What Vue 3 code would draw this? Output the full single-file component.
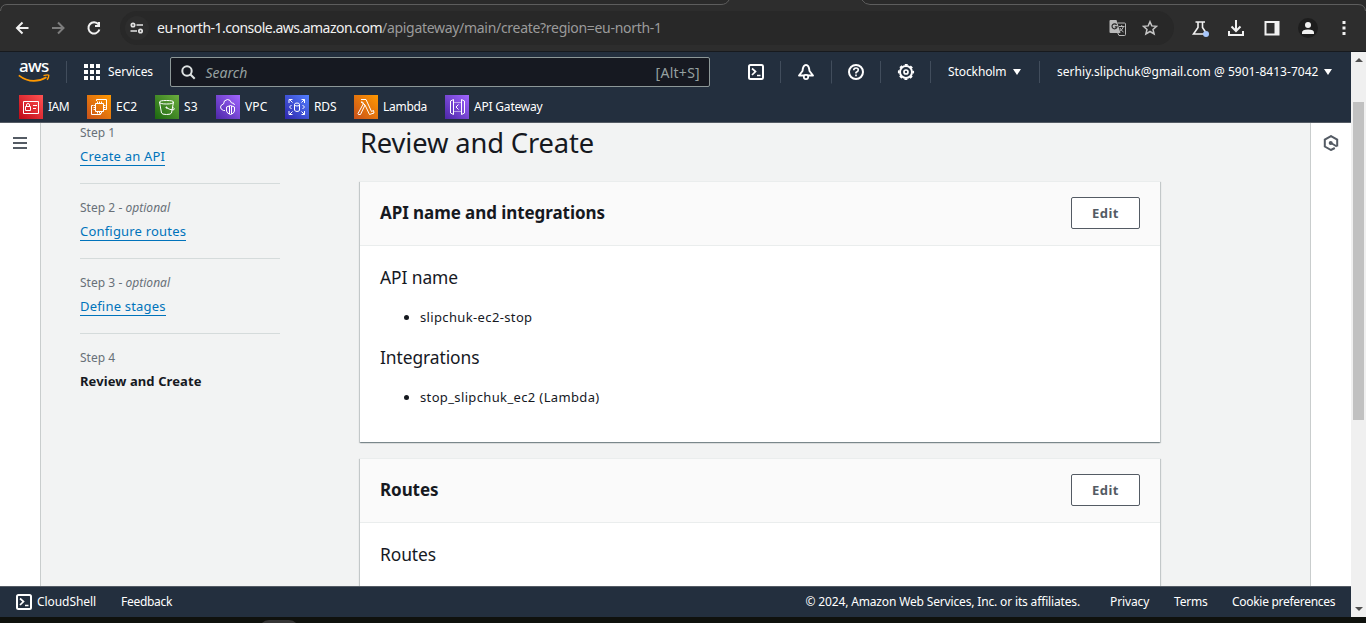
<script setup>
const steps = [
  { label: 'Step 1', title: 'Create an API', cls: 'loose' },
  { label: 'Step 2', optional: true, title: 'Configure routes', cls: 'loose' },
  { label: 'Step 3', optional: true, title: 'Define stages', cls: 'loose' },
  { label: 'Step 4', title: 'Review and Create', cls: 'current' },
]
</script>

<template>
  <div class="page">
    <header class="chrome">
      <svg class="tabline" width="1366" height="14" viewBox="0 0 1366 14" fill="none">
        <path d="M0 0H1366V14H0Z" fill="#2a2a2a" />
        <path d="M0 14V12Q0 4.500 7 4.500H722Q727 4.500 729 0H862Q865 4.500 870 4.500H1359Q1366 4.500 1366 12V14Z" fill="#2d2d2d" />
        <path d="M.5 11Q1 4.500 7 4.500H721Q726.500 4.500 729 0M862 0Q865 4.500 870 4.500H1358Q1365 4.500 1365.500 11" stroke="#5d5d5d" />
      </svg>
      <div class="toolbar">
        <svg class="nav-icons" width="100" height="20" viewBox="10 18 100 20" fill="none" stroke-width="2">
          <path d="M28.500 28H17.500M22.500 22.500L17 28L22.500 33.500" stroke="#f1f1f1" />
          <path d="M52 28H63M58 22.500L63.500 28L58 33.500" stroke="#7d7d7d" />
          <path d="M98.500 24.500A5.600 5.600 0 1 0 99.400 29.500" stroke="#f1f1f1" />
          <path d="M100 22V27H95V25H98V22Z" fill="#f1f1f1" />
        </svg>
        <div class="address">
          <span class="site-info">
            <svg width="14" height="12" viewBox="0 0 14 12" fill="none" stroke="#e3e3e3" stroke-width="1.700">
              <circle cx="3" cy="3" r="1.700" /><path d="M6.500 3H13M.5 9H7" /><circle cx="10.500" cy="9" r="1.700" />
            </svg>
          </span>
          <span class="host">eu-north-1.console.aws.amazon.com</span><span class="path">/apigateway/main/create?region=eu-north-1</span>
          <svg class="translate" width="18" height="18" viewBox="0 0 18 18" fill="none">
            <path d="M1.500 1H7.500L11.500 14H1.500Q.5 14 .5 13V2Q.5 1 1.500 1Z" fill="#b9b9b9" />
            <path d="M8.500 4H15.500Q16.500 4 16.500 5V15.500Q16.500 16.500 15.500 16.500H10L8.500 13.500" stroke="#b9b9b9" />
            <path d="M10 7.500H15.500M12.700 6V7.500M14.500 7.500Q13.500 11 10.500 12.500M11 9Q12 11.500 14.500 13" stroke="#b9b9b9" />
            <path d="M7.600 5.900A2.500 2.500 0 1 0 8 7.800H5.800" stroke="#292929" stroke-width="1.200" />
          </svg>
          <svg class="star" width="16" height="16" viewBox="0 0 16 16" fill="none" stroke="#c5c5c5" stroke-width="1.500">
            <path d="M8 1.700L9.800 5.900L14.500 6.300L11 9.400L12.100 14L8 11.500L3.900 14L5 9.400L1.500 6.300L6.200 5.900Z" />
          </svg>
        </div>
        <svg class="ext-icons" width="170" height="24" viewBox="1186 16 170 24" fill="none" stroke="#f1f1f1" stroke-width="2">
          <path d="M1195.500 22H1205M1198 22V27.500L1193.500 34H1204M1202.500 22V27.500L1205.500 32" stroke-width="1.600" />
          <circle cx="1206" cy="34" r="3" fill="#a8c7fa" stroke="none" />
          <path d="M1236 20V30M1231.500 26.500L1236 31L1240.500 26.500M1229 31V35H1243V31" />
          <rect x="1265.500" y="22" width="13" height="12.500" /><path d="M1276.500 22V34" stroke-width="4" />
          <circle cx="1308" cy="28" r="10" fill="#1d1d1d" stroke="none" />
          <circle cx="1308" cy="25" r="3" fill="#f1f1f1" stroke="none" />
          <path d="M1302 34V32.500Q1302 29.500 1308 29.500Q1314 29.500 1314 32.500V34Z" fill="#f1f1f1" stroke="none" />
          <path d="M1344 21V24M1344 26.500V29.500M1344 32V35" stroke-width="3" />
        </svg>
      </div>
    </header>

    <div class="viewport">
      <div class="site">
        <nav class="topnav">
          <div class="row1">
            <div class="logo">
              <span>aws</span>
              <svg width="33" height="9" viewBox="0 0 33 9" fill="none" stroke="#ff9900" stroke-width="1.700">
                <path d="M.8 1.300Q14 11.500 28.500 3.200" /><path d="M25.500 1.600Q30 .3 30.800 1.200Q30.800 3.500 29.200 5.800" stroke-width="1.400" />
              </svg>
            </div>
            <i class="sep s1"></i>
            <svg class="grid-icon" width="16" height="16" viewBox="0 0 16 16" fill="#fff">
              <path d="M0 0h4v4H0zM6 0h4v4H6zM12 0h4v4h-4zM0 6h4v4H0zM6 6h4v4H6zM12 6h4v4h-4zM0 12h4v4H0zM6 12h4v4H6zM12 12h4v4h-4z" />
            </svg>
            <span class="services">Services</span>
            <div class="search">
              <svg width="15" height="15" viewBox="0 0 15 15" fill="none" stroke="#dfe3e3" stroke-width="2">
                <circle cx="6" cy="6" r="4.700" /><path d="M9.500 9.500L13.700 13.700" />
              </svg>
              <span class="ph">Search</span><span class="kbd">[Alt+S]</span>
            </div>
            <svg class="tools" width="184" height="24" viewBox="740 60 184 24" fill="none" stroke="#fff" stroke-width="2">
              <rect x="749" y="65" width="14" height="14" rx="1.500" />
              <path d="M752 68.500L755.500 71.500L752 75M757 75.500H760.500" stroke-width="1.700" />
              <path d="M780.500 61V83M831.500 60.500V83.500M880.500 61V83" stroke="#414d5c" stroke-width="1" />
              <path d="M799 75.500L802.500 71Q803 65 806 65Q809 65 809.500 71L813 75.500Z" stroke-width="1.900" stroke-linejoin="round" />
              <circle cx="806" cy="77" r="2.200" fill="#232f3e" stroke-width="1.700" />
              <circle cx="856" cy="72" r="7" />
              <path d="M853.700 70.300Q853.800 68 856 68Q858.300 68 858.300 70Q858.300 71.300 856 72.500V73.500M856 74.500V76.300" stroke-width="1.600" />
              <circle cx="906" cy="72" r="6" />
              <circle cx="906" cy="72" r="7.300" stroke-width="1.600" stroke-dasharray="2.870 2.864" stroke-dashoffset="1.430" />
              <circle cx="906" cy="72" r="2" stroke-width="1.700" />
            </svg>
            <i class="sep s2"></i>
            <span class="region">Stockholm</span><b class="caret"></b>
            <i class="sep s3"></i>
            <span class="account">serhiy.slipchuk@gmail.com @ 5901-8413-7042</span><b class="caret"></b>
          </div>
          <div class="row2">
            <svg width="0" height="0" class="defs">
              <defs>
                <linearGradient id="gr" x1="0" y1="1" x2="1" y2="0"><stop stop-color="#bd0816" /><stop offset="1" stop-color="#ff5252" /></linearGradient>
                <linearGradient id="go" x1="0" y1="1" x2="1" y2="0"><stop stop-color="#c8511b" /><stop offset="1" stop-color="#ff9900" /></linearGradient>
                <linearGradient id="gg" x1="0" y1="1" x2="1" y2="0"><stop stop-color="#1b660f" /><stop offset="1" stop-color="#6cae3e" /></linearGradient>
                <linearGradient id="gp" x1="0" y1="1" x2="1" y2="0"><stop stop-color="#4d27a8" /><stop offset="1" stop-color="#a166ff" /></linearGradient>
                <linearGradient id="gb" x1="0" y1="1" x2="1" y2="0"><stop stop-color="#2e27ad" /><stop offset="1" stop-color="#527fff" /></linearGradient>
              </defs>
            </svg>
            <div class="fav iam">
              <svg width="24" height="24" viewBox="0 0 24 24"><path d="M0 0H24V24H0Z" fill="url(#gr)" /><path d="M4.500 6.500H19.500V18.500H4.500ZM6.500 11.500H11.500V15.500H6.500ZM7.500 11.500V10Q7.500 8.500 9 8.500Q10.500 8.500 10.500 10V11.500M14 10.500H18M14 13.500H17" /></svg>
              <span>IAM</span>
            </div>
            <div class="fav">
              <svg width="24" height="24" viewBox="0 0 24 24"><path d="M0 0H24V24H0Z" fill="url(#go)" /><path d="M8.500 8.500H16.500V16.500H8.500ZM10.500 8.500V6.500M12.500 8.500V6.500M14.500 8.500V6.500M10.500 16.500V18.500M12.500 16.500V18.500M14.500 16.500V18.500M6.500 10.500H8.500M6.500 12.500H8.500M6.500 14.500H8.500M16.500 10.500H18.500M16.500 12.500H18.500M16.500 14.500H18.500M9.500 6V4.500H19.500V14.500H18M6 10.500H4.500V19.500H13.500V18" /></svg>
              <span>EC2</span>
            </div>
            <div class="fav s3b">
              <svg width="24" height="24" viewBox="0 0 24 24"><path d="M0 0H24V24H0Z" fill="url(#gg)" /><path d="M4.500 7L6.500 18Q7 19.500 11.500 19.500Q16 19.500 16.500 18L18.500 7M4.500 7Q4.500 5.500 11.500 5.500Q18.500 5.500 18.500 7Q18.500 9 11.500 9Q4.500 9 4.500 7M11 12.500Q15 15 18.500 15Q20.500 14 17.500 12" /><circle cx="11.500" cy="12.500" r=".6" /></svg>
              <span>S3</span>
            </div>
            <div class="fav vpc">
              <svg width="24" height="24" viewBox="0 0 24 24"><path d="M0 0H24V24H0Z" fill="url(#gp)" /><path d="M9 15.500H7.500Q4.500 14.500 4.500 12Q5 9.500 7.500 9Q7.500 5 11.500 4.500Q14.500 4.500 15.500 8Q18 7.500 18.500 10M10.500 12L14.500 10.500L18.500 12V16Q18 18.500 14.500 19.500Q11 18.500 10.500 16ZM13.500 11V19M15.500 11V19" /></svg>
              <span>VPC</span>
            </div>
            <div class="fav rds">
              <svg width="24" height="24" viewBox="0 0 24 24"><path d="M0 0H24V24H0Z" fill="url(#gb)" /><path d="M9.500 9.500V15Q10 16.500 12 16.500Q14.500 16.500 14.500 15V9.500Q14.500 8 12 8Q9.500 8 9.500 9.500Q9.500 11 12 11Q14.500 11 14.500 9.500M4 8V4.500H7.500M4.500 4.500L7.500 7.500M16.500 4.500H19.500V8M19.500 4.500L16.500 7.500M4 16V19.500H7.500M4.500 19.500L7.500 16.500M16.500 19.500H19.500V16M19.500 19.500L16.500 16.500M6.500 10L4.500 12L6.500 14M17.500 10L19.500 12L17.500 14" /></svg>
              <span>RDS</span>
            </div>
            <div class="fav lambda">
              <svg width="24" height="24" viewBox="0 0 24 24"><path d="M0 0H24V24H0Z" fill="url(#go)" /><path d="M7 4.500H12L17.500 16.500L19.500 15.500L20 18L15.500 19.500L11 10M11 10L6.500 19.500H4.500L4 18.500L9.500 8.500L8.500 7H7ZM11 10L9.500 8.500" /></svg>
              <span>Lambda</span>
            </div>
            <div class="fav gateway">
              <svg width="24" height="24" viewBox="0 0 24 24"><path d="M0 0H24V24H0Z" fill="url(#gp)" /><path d="M8.500 4.500V19.500L5.500 18V6ZM16.500 4.500V19.500L19.500 18V6ZM13.500 9.500L11 12L13.500 14.500" /><path d="M9.500 7.500H16M9.500 16.500H16" stroke-dasharray="1 1" /></svg>
              <span>API Gateway</span>
            </div>
          </div>
        </nav>

        <div class="body">
          <aside class="rail left">
            <svg width="14" height="12" viewBox="0 0 14 12" fill="#545b64"><path d="M0 0H14V2H0ZM0 5H14V7H0ZM0 10H14V12H0Z" /></svg>
          </aside>
          <div class="content">
            <ol class="steps">
              <li v-for="s in steps" :key="s.label">
                <div class="label">{{ s.label }}<template v-if="s.optional"> - <i>optional</i></template></div>
                <span :class="['title', s.cls]">{{ s.title }}</span>
              </li>
            </ol>
            <main class="main">
              <h1>Review and Create</h1>
              <section class="card">
                <div class="card-head"><h2>API name and integrations</h2><button><span>Edit</span></button></div>
                <div class="card-body">
                  <h3>API name</h3>
                  <ul><li>slipchuk-ec2-stop</li></ul>
                  <h3>Integrations</h3>
                  <ul><li>stop_slipchuk_ec2 (Lambda)</li></ul>
                </div>
              </section>
              <section class="card">
                <div class="card-head"><h2>Routes</h2><button><span>Edit</span></button></div>
                <div class="card-body"><h3>Routes</h3></div>
              </section>
            </main>
          </div>
          <aside class="rail right">
            <svg width="16" height="16" viewBox="0 0 16 16" fill="none" stroke="#545b64" stroke-width="2">
              <path d="M11.800 13L8 15L1.800 11.500V4.500L8 1.100L14.200 4.500V11.500" /><circle cx="7.700" cy="7.900" r="2" fill="#545b64" stroke="none" /><path d="M8 8L13.800 11.500" />
            </svg>
          </aside>
        </div>

        <footer class="footer">
          <svg width="16" height="16" viewBox="0 0 16 16" fill="none" stroke="#fff" stroke-width="2">
            <rect x="1" y="1" width="14" height="14" rx="1.500" /><path d="M4 4.500L7.500 7.500L4 11M9 11.500H12.500" stroke-width="1.700" />
          </svg>
          <span class="f-shell">CloudShell</span>
          <span class="f-feed">Feedback</span>
          <span class="f-copy">© 2024, Amazon Web Services, Inc. or its affiliates.</span>
          <span class="f-priv">Privacy</span>
          <span class="f-terms">Terms</span>
          <span class="f-cook">Cookie preferences</span>
        </footer>
      </div>
      <div class="scrollbar">
        <b class="up"></b><div class="thumb"></div><b class="down"></b>
      </div>
    </div>
    <div class="desk"><i></i></div>
  </div>
</template>

<style>
body { background: #0f110d; overflow: hidden; }
</style>

<style scoped>
* { box-sizing: border-box; }
svg { flex: none; display: block; }
.page { width: 1366px; height: 623px; overflow: hidden; display: flex; flex-direction: column; font-family: "Noto Sans", "Open Sans", sans-serif; white-space: nowrap; }
.chrome { height: 52px; flex: none; background: #2d2d2d; border-bottom: 1px solid #171a1e; position: relative; }
.tabline { position: absolute; left: 0; top: 0; }
.toolbar { position: relative; display: flex; align-items: center; height: 34px; margin-top: 11px; padding-left: 10px; }
.address { display: flex; align-items: center; width: 1054px; height: 34px; margin-left: 10px; border-radius: 17px; background: #282828; padding-left: 5px; font-size: 14px; line-height: 20px; }
.site-info { width: 24px; height: 24px; border-radius: 12px; background: #2d2d2d; display: flex; align-items: center; justify-content: center; margin-right: 8px; }
.host { color: #f1f1f1; width: 225px; letter-spacing: -.517px; }
.path { color: #9b9b9b; letter-spacing: -.3px; }
.translate { margin-left: auto; }
.star { margin: 0 16px 0 15px; }
.ext-icons { margin-left: 12px; }

.viewport { display: flex; height: 565px; flex: none; }
.site { width: 1351px; display: flex; flex-direction: column; background: #fff; }
.topnav { height: 71px; flex: none; background: #232f3e; border-bottom: 1px solid #545b64; color: #fff; font-size: 12px; line-height: 17px; }
.row1 { display: flex; height: 40px; align-items: center; padding-left: 18px; }
.logo { width: 33px; height: 24px; }
.logo span { display: block; font-size: 17px; line-height: 14px; height: 14px; font-weight: 500; letter-spacing: -.7px; margin-top: -1px; padding-left: 1px; }
.logo svg { margin-top: 1px; }
.sep { width: 1px; height: 22px; background: #414d5c; flex: none; }
.s1 { margin-left: 15px; margin-right: 17px; }
.services, .region, .account, .fav span, .footer span { padding-bottom: 1px; }
.services { margin-left: 8px; width: 62px; letter-spacing: -.098px; }
.search { width: 540px; height: 30px; border: 1px solid #8d9898; border-radius: 2px; background: #161921; display: flex; align-items: center; padding: 0 9px 0 10px; color: #95a0a0; font-size: 14px; line-height: 20px; }
.ph { font-style: italic; margin-left: 9.500px; padding-top: 1px; }
.kbd { margin-left: auto; letter-spacing: .28px; padding-top: 1px; }
.tools { margin-left: 30px; }
.s2 { margin-left: 6px; margin-right: 17px; }
.region { letter-spacing: -.094px; width: 65px; }
.caret { width: 0; height: 0; border: 4px solid transparent; border-top: 6px solid #fff; border-bottom: 0; }
.s3 { margin-left: 18px; margin-right: 17px; }
.account { width: 267px; letter-spacing: .034px; }
.row2 { display: grid; grid-template-columns: 68px 68px 61px 69px 69px 91px auto; padding: 3px 0 0 19px; justify-content: start; position: relative; }
.defs { position: absolute; }
.fav { display: flex; align-items: center; gap: 5px; height: 24px; }
.fav svg { fill: none; stroke: #fff; stroke-width: 1px; }
.fav svg path:first-child { stroke: none; }
.iam { letter-spacing: -.5px; }
.s3b { letter-spacing: .27px; }
.vpc { letter-spacing: .15px; }
.rds { letter-spacing: -.1px; }
.lambda { letter-spacing: -.28px; }
.gateway { letter-spacing: -.2px; }

.body { display: flex; height: 463px; flex: none; overflow: hidden; }
.rail { background: #fff; height: 463px; }
.left { width: 41px; border-right: 1px solid #c9cdcd; padding: 14px 0 0 13px; }
.right { width: 41px; border-left: 1px solid #c9cdcd; padding: 12px 0 0 12px; }
.content { width: 1269px; display: flex; background: #f2f3f3; padding-left: 39px; color: #16191f; }
.steps { list-style: none; margin: 0; padding: 0; width: 200px; }
.steps li { height: 61px; margin-bottom: 14px; border-bottom: 1px solid #d5dbdb; }
.steps li:last-child { border: 0; }
.label { font-size: 12px; line-height: 20px; height: 23px; color: #687078; letter-spacing: .03px; }
.title { display: block; width: fit-content; font-size: 13px; line-height: 20px; height: 20px; color: #0073bb; border-bottom: 1px solid #0073bb; }
.title.loose { letter-spacing: .19px; }
.title.current { color: #16191f; font-weight: 700; border: 0; letter-spacing: .086px; line-height: 20px; }
.main { width: 800px; margin-left: 80px; }
h1, h2, h3, ul { margin: 0; padding: 0; }
h1 { font-size: 27.300px; font-weight: 400; line-height: 36px; height: 58px; padding-top: 2px; letter-spacing: -.13px; }
.card { background: #fff; height: 261px; margin-bottom: 16px; border-top: 1px solid #eaeded; box-shadow: 0 1px 1px 0 rgba(0,28,36,.3), 1px 1px 1px 0 rgba(0,28,36,.15), -1px 1px 1px 0 rgba(0,28,36,.15); }
.card-head { height: 64px; background: #fafafa; border-bottom: 1px solid #eaeded; padding: 0 20px 2px; display: flex; align-items: center; justify-content: space-between; }
h2 { font-size: 17px; line-height: 24px; font-weight: 700; letter-spacing: -.07px; }
button { width: 69px; height: 32px; border: 1px solid #545b64; border-radius: 2px; background: #fff; color: #545b64; padding: 0; font: 700 13px/18px "Noto Sans", sans-serif; letter-spacing: .5px; }
.card-body { padding: 19px 20px 20px; }
h3 { font-size: 17.400px; line-height: 24px; font-weight: 400; letter-spacing: -.08px; }
ul { padding: 15px 0 15px 40px; font-size: 13px; line-height: 26px; letter-spacing: .36px; }
ul li { height: 26px; }

.footer { height: 31px; flex: none; background: #232f3e; border-top: 1px solid #545b64; color: #fff; font-size: 12px; line-height: 17px; display: flex; align-items: center; padding-left: 16px; }
.f-shell { margin-left: 5px; width: 84px; letter-spacing: -.07px; }
.f-feed { letter-spacing: -.29px; width: 684.500px; }
.f-copy { letter-spacing: -.155px; width: 304.500px; }
.f-priv { letter-spacing: -.12px; width: 64px; }
.f-terms { letter-spacing: -.206px; width: 58px; }
.f-cook { letter-spacing: -.29px; }
.scrollbar { width: 15px; height: 565px; background: #f0f0f0; display: flex; flex-direction: column; align-items: center; padding-bottom: 6px; }
.up { border: 4px solid transparent; border-bottom: 4px solid #505050; border-top: 0; margin-top: 6px; }
.thumb { width: 11px; height: 318px; margin-top: 40px; background: #c1c1c1; }
.down { border: 4px solid transparent; border-top: 4px solid #505050; border-bottom: 0; margin-top: auto; }
.desk { height: 6px; flex: none; background: #0f110d; overflow: hidden; }
.desk i { display: block; width: 40px; height: 20px; border-radius: 10px; background: #363636; margin: 3px 0 0 259px; }
</style>
